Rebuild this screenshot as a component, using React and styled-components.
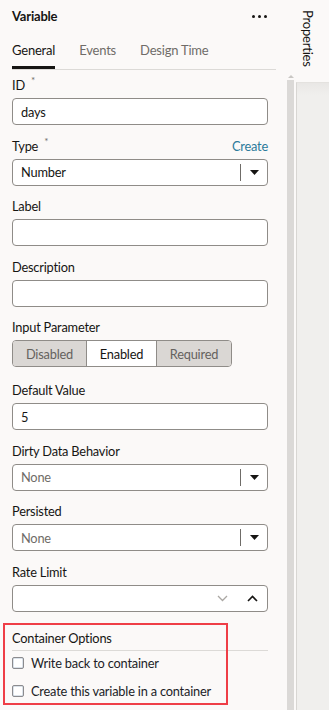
import React from "react";
import styled, { createGlobalStyle } from "styled-components";

const GlobalStyle = createGlobalStyle`
  html, body {
    margin: 0;
    padding: 0;
    background: #fbf9f8;
  }
  body {
    font-family: Lato, "Noto Sans", sans-serif;
    font-size: 12.8px;
    letter-spacing: -0.2px;
    color: #161513;
  }
  * { box-sizing: border-box; }
`;

const Page = styled.div`
  display: flex;
  width: 329px;
  height: 710px;
  overflow: hidden;
  background: #fbf9f8;
`;

const Panel = styled.div`
  width: 287px;
  flex: none;
  padding: 0 19px 0 12px;
`;

const Header = styled.div`
  height: 32px;
  display: flex;
  align-items: center;
  justify-content: space-between;
`;

const Title = styled.div`
  font-size: 13px;
  font-weight: 700;
`;

const More = styled.div`
  display: flex;
  gap: 3px;
  padding-right: 1px;
  span {
    width: 3px;
    height: 3px;
    border-radius: 50%;
    background: #161513;
  }
`;

const Tabs = styled.div`
  display: flex;
  gap: 24px;
  border-bottom: 1px solid #dcdad7;
  margin-right: -8px;
`;

const Tab = styled.div`
  font-size: 13px;
  line-height: 18px;
  padding: 9px 0 7px;
  color: ${(p) => (p.$active ? "#161513" : "#6f6c68")};
  border-bottom: 3px solid ${(p) => (p.$active ? "#161513" : "transparent")};
`;

const Form = styled.div`
  display: flex;
  flex-direction: column;
  gap: 11.5px;
  padding-top: 6px;
`;

const Field = styled.div`
  display: flex;
  flex-direction: column;
  gap: 4px;
  margin-top: ${(p) => p.$extra || 0}px;
`;

const LabelRow = styled.div`
  display: flex;
  justify-content: space-between;
  align-items: center;
  height: 18px;
  line-height: 18px;
`;

const Label = styled.div`
  display: flex;
  align-items: flex-start;
`;

const Star = styled.span`
  font-size: 10px;
  line-height: 10px;
  color: #6f6c68;
  margin-left: 6px;
  margin-top: -1px;
`;

const Link = styled.div`
  color: #2b7b9b;
`;

const Box = styled.div`
  height: 27px;
  background: #fff;
  border: 1px solid #8f8c88;
  border-radius: 4px;
  display: flex;
  align-items: center;
  padding-left: 8px;
  color: #161513;
`;

const BoxText = styled.div`
  flex: 1;
  color: ${(p) => (p.$muted ? "#6f6c68" : "#161513")};
`;

const Divider = styled.div`
  width: 1px;
  align-self: stretch;
  margin: 4px 0;
  background: #6f6c68;
`;

const Caret = styled.div`
  width: 26px;
  display: flex;
  justify-content: center;
  align-items: center;
`;

const Chevrons = styled.div`
  display: flex;
  align-items: center;
  gap: 19px;
  padding-right: 9px;
`;

const Segmented = styled.div`
  display: flex;
  align-self: flex-start;
  border: 1px solid #8f8c88;
  border-radius: 4px;
  overflow: hidden;
  height: 27px;
`;

const Segment = styled.div`
  display: flex;
  align-items: center;
  justify-content: center;
  width: ${(p) => p.$w}px;
  background: ${(p) => (p.$on ? "#fff" : "#dad7d4")};
  color: ${(p) => (p.$on ? "#161513" : "#65625e")};
  & + & {
    border-left: 1px solid #8f8c88;
  }
`;

const Section = styled.div`
  position: relative;
  margin-top: 11.5px;
`;

const SectionTitle = styled.div`
  line-height: 18px;
  padding: 6px 0 3px;
  border-bottom: 1px solid #dcdad7;
`;

const Checks = styled.div`
  display: flex;
  flex-direction: column;
  gap: 4px;
`;

const CheckRow = styled.label`
  display: flex;
  align-items: center;
  gap: 7px;
  height: 24px;
  color: #221d27;
`;

const CheckBox = styled.span`
  width: 12px;
  height: 12px;
  border: 1px solid #8b8b8e;
  border-radius: 2px;
  background: #fff;
  box-shadow: inset 0 0 0 0.5px #b8c6d4;
`;

const Highlight = styled.div`
  position: absolute;
  left: -9px;
  top: 0;
  width: 225px;
  height: 82px;
  border: 2px solid #ef3e47;
  pointer-events: none;
`;

const Side = styled.div`
  flex: 1;
  display: flex;
  flex-direction: column;
`;

const SideTop = styled.div`
  height: 75px;
  flex: none;
  display: flex;
  justify-content: flex-end;
  padding-right: 13px;
`;

const VerticalTab = styled.div`
  writing-mode: vertical-rl;
  font-size: 13px;
  padding-top: 10px;
  color: #161513;
`;

const SideBody = styled.div`
  flex: 1;
  display: flex;
`;

const Track = styled.div`
  width: 7px;
  display: flex;
  flex-direction: column;
  align-items: center;
`;

const TrackArrow = styled.div`
  width: 0;
  height: 0;
  border-left: 3px solid transparent;
  border-right: 3px solid transparent;
  border-bottom: 3px solid #c9c7c4;
  margin-bottom: 2px;
`;

const TrackBar = styled.div`
  flex: 1;
  width: 7px;
  background: #dbd9d7;
`;

const Pane = styled.div`
  flex: 1;
  margin-left: 2px;
  margin-top: 7px;
  border-left: 1px solid #d8d6d3;
  border-top: 1px solid #e4e2df;
  background: linear-gradient(#e9e7e5, #f0efed 12px);
`;

const TriangleDown = () => (
  <svg width="9" height="5" viewBox="0 0 9 5">
    <path d="M0 0h9L4.5 5z" fill="#161513" />
  </svg>
);

const ChevronDown = () => (
  <svg width="11" height="7" viewBox="0 0 11 7">
    <path d="M1 1l4.5 4.5L10 1" fill="none" stroke="#aaa7a3" strokeWidth="1.3" />
  </svg>
);

const ChevronUp = () => (
  <svg width="11" height="7" viewBox="0 0 11 7">
    <path d="M1 6l4.5-4.5L10 6" fill="none" stroke="#161513" strokeWidth="1.6" />
  </svg>
);

function Input({ value }) {
  return (
    <Box>
      <BoxText>{value}</BoxText>
    </Box>
  );
}

function Select({ value, muted }) {
  return (
    <Box>
      <BoxText $muted={muted}>{value}</BoxText>
      <Divider />
      <Caret>
        <TriangleDown />
      </Caret>
    </Box>
  );
}

function Labeled({ label, required, action, extra, children }) {
  return (
    <Field $extra={extra}>
      <LabelRow>
        <Label>
          {label}
          {required && <Star>*</Star>}
        </Label>
        {action && <Link>{action}</Link>}
      </LabelRow>
      {children}
    </Field>
  );
}

export default function App() {
  return (
    <Page>
      <GlobalStyle />
      <Panel>
        <Header>
          <Title>Variable</Title>
          <More>
            <span />
            <span />
            <span />
          </More>
        </Header>
        <Tabs>
          <Tab $active>General</Tab>
          <Tab>Events</Tab>
          <Tab>Design Time</Tab>
        </Tabs>
        <Form>
          <Labeled label="ID" required>
            <Input value="days" />
          </Labeled>
          <Labeled label="Type" required action="Create">
            <Select value="Number" />
          </Labeled>
          <Labeled label="Label">
            <Input value="" />
          </Labeled>
          <Labeled label="Description">
            <Input value="" />
          </Labeled>
          <Labeled label="Input Parameter">
            <Segmented>
              <Segment $w={73}>Disabled</Segment>
              <Segment $w={70} $on>
                Enabled
              </Segment>
              <Segment $w={75}>Required</Segment>
            </Segmented>
          </Labeled>
          <Labeled label="Default Value" extra={2.5}>
            <Input value="5" />
          </Labeled>
          <Labeled label="Dirty Data Behavior">
            <Select value="None" muted />
          </Labeled>
          <Labeled label="Persisted">
            <Select value="None" muted />
          </Labeled>
          <Labeled label="Rate Limit">
            <Box>
              <BoxText />
              <Chevrons>
                <ChevronDown />
                <ChevronUp />
              </Chevrons>
            </Box>
          </Labeled>
        </Form>
        <Section>
          <SectionTitle>Container Options</SectionTitle>
          <Checks>
            <CheckRow>
              <CheckBox />
              Write back to container
            </CheckRow>
            <CheckRow>
              <CheckBox />
              Create this variable in a container
            </CheckRow>
          </Checks>
          <Highlight />
        </Section>
      </Panel>
      <Side>
        <SideTop>
          <VerticalTab>Properties</VerticalTab>
        </SideTop>
        <SideBody>
          <Track>
            <TrackArrow />
            <TrackBar />
          </Track>
          <Pane />
        </SideBody>
      </Side>
    </Page>
  );
}
